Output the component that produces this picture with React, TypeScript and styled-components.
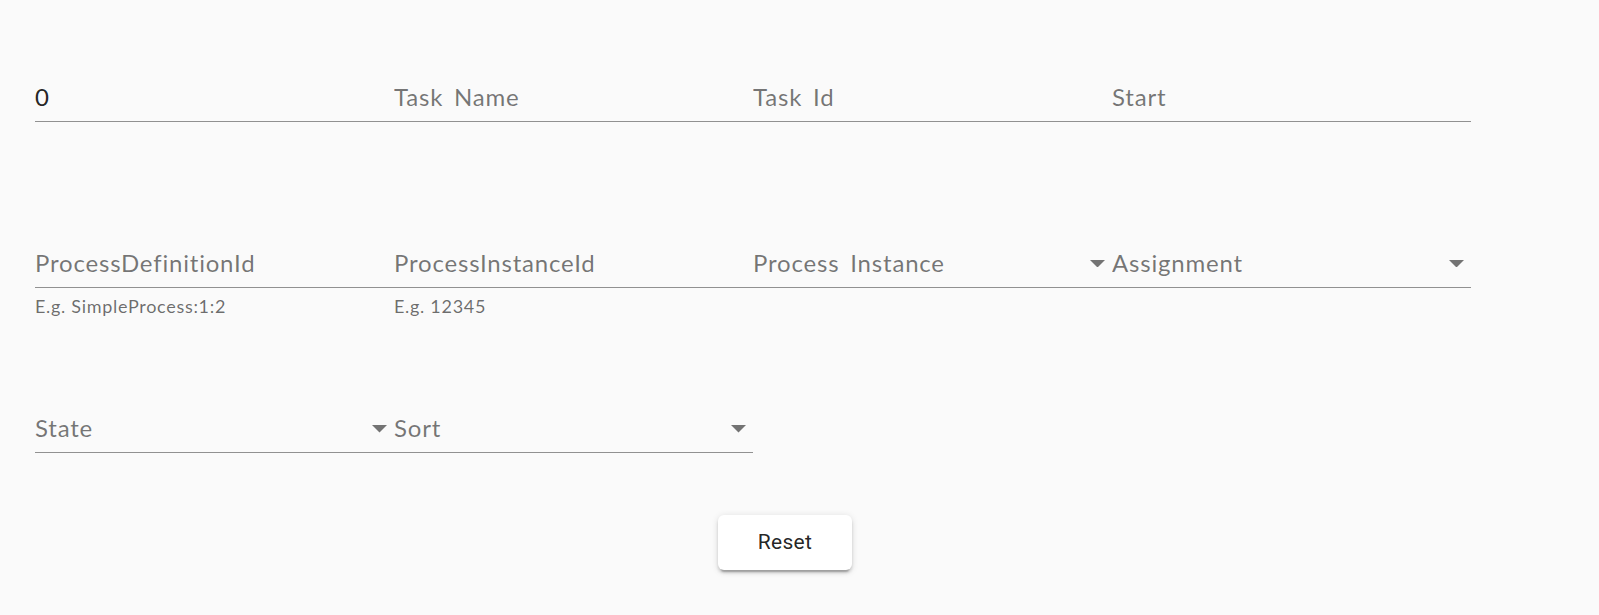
import React from "react";
import styled, { createGlobalStyle } from "styled-components";

const GlobalStyle = createGlobalStyle`
  html, body {
    margin: 0;
    padding: 0;
    background: #fafafa;
  }
  body {
    font-family: "Lato", "Noto Sans", sans-serif;
  }
`;

const Page = styled.div`
  padding: 83px 0 40px 35px;
`;

const Content = styled.div`
  width: 1500px;
`;

const FieldGrid = styled.div`
  display: grid;
  grid-template-columns: repeat(4, 359px);
  grid-template-rows: 165.5px 165.5px auto;
`;

const Field = styled.div`
  position: relative;
  display: flex;
  flex-direction: column;
`;

const InputBox = styled.div<{ $filled?: boolean }>`
  height: 27px;
  padding-bottom: 11px;
  border-bottom: 1.5px solid rgba(0, 0, 0, 0.42);
  font-size: 24px;
  line-height: 27px;
  letter-spacing: 0.8px;
  word-spacing: 4px;
  color: ${(p) => (p.$filled ? "rgba(0, 0, 0, 0.87)" : "rgba(0, 0, 0, 0.54)")};
  white-space: nowrap;
  overflow: hidden;
`;

const HelperText = styled.div`
  margin-top: 8px;
  font-size: 18px;
  line-height: 21px;
  letter-spacing: 0.7px;
  color: rgba(0, 0, 0, 0.58);
`;

const ArrowIcon = styled.svg`
  position: absolute;
  top: 11px;
  right: 7px;
  width: 15px;
  height: 7.5px;
  fill: rgba(0, 0, 0, 0.54);
`;

const Actions = styled.div`
  display: flex;
  justify-content: center;
  margin-top: 61.5px;
`;

const Button = styled.button`
  height: 55px;
  padding: 0 40px;
  border: none;
  border-radius: 6px;
  background: #fff;
  color: rgba(0, 0, 0, 0.87);
  font-family: "Roboto", "Liberation Sans", sans-serif;
  font-size: 21px;
  letter-spacing: 0.3px;
  cursor: pointer;
  box-shadow: 0 4.5px 1.5px -3px rgba(0, 0, 0, 0.2),
    0 3px 3px 0 rgba(0, 0, 0, 0.14), 0 1.5px 7.5px 0 rgba(0, 0, 0, 0.12);
`;

interface FieldDef {
  label: string;
  value?: string;
  helper?: string;
  select?: boolean;
}

const fields: FieldDef[] = [
  { label: "0", value: "0" },
  { label: "Task Name" },
  { label: "Task Id" },
  { label: "Start" },
  { label: "ProcessDefinitionId", helper: "E.g. SimpleProcess:1:2" },
  { label: "ProcessInstanceId", helper: "E.g. 12345" },
  { label: "Process Instance", select: true },
  { label: "Assignment", select: true },
  { label: "State", select: true },
  { label: "Sort", select: true },
];

const TextField: React.FC<FieldDef> = ({ label, value, helper, select }) => (
  <Field>
    <InputBox $filled={!!value}>{value ?? label}</InputBox>
    {select && (
      <ArrowIcon viewBox="0 0 10 5">
        <path d="M0 0l5 5 5-5z" />
      </ArrowIcon>
    )}
    {helper && <HelperText>{helper}</HelperText>}
  </Field>
);

export default function App() {
  return (
    <>
      <GlobalStyle />
      <Page>
        <Content>
          <FieldGrid>
            {fields.map((f, i) => (
              <TextField key={i} {...f} />
            ))}
          </FieldGrid>
          <Actions>
            <Button>Reset</Button>
          </Actions>
        </Content>
      </Page>
    </>
  );
}
